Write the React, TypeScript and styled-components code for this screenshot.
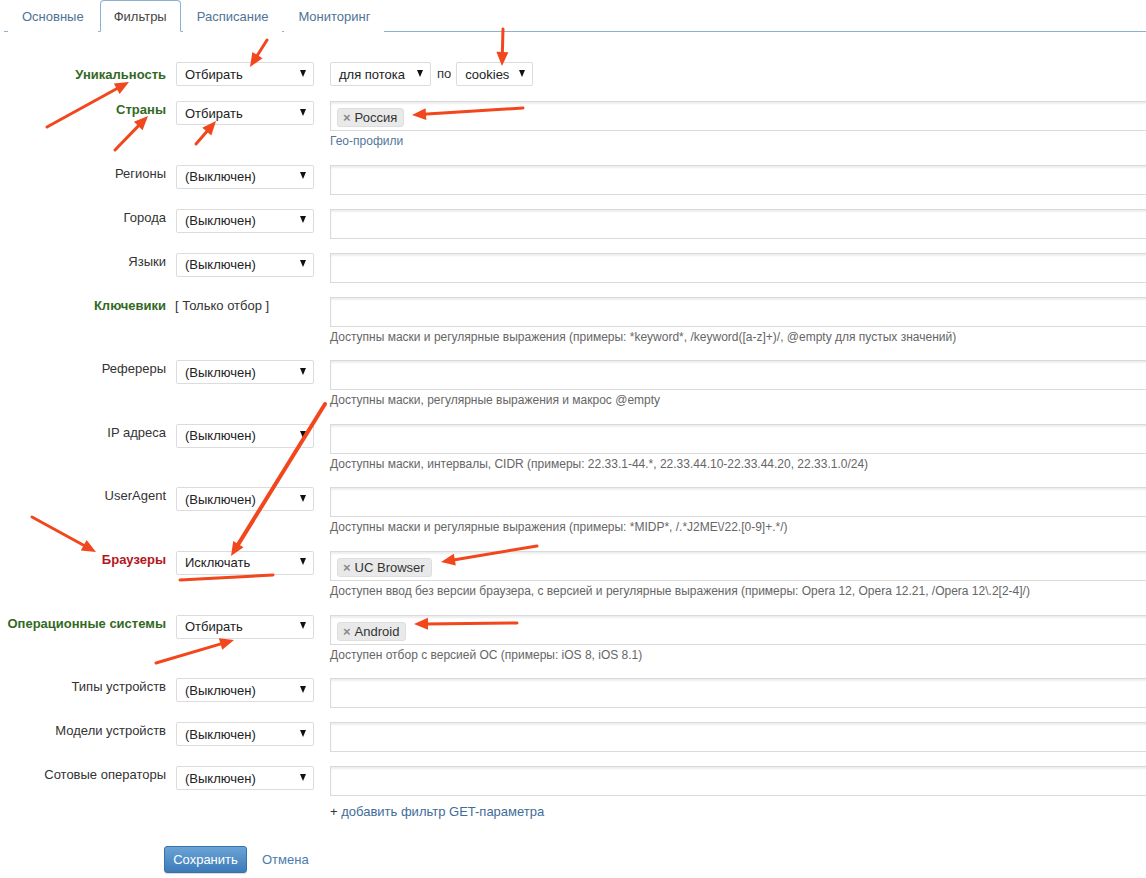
import React from 'react';
import styled, { createGlobalStyle } from 'styled-components';

const Global = createGlobalStyle`
  html, body { margin: 0; padding: 0; background: #fff; }
  body {
    font-family: "Liberation Sans", Arial, sans-serif;
    font-size: 13px;
    color: #333;
    overflow: hidden;
  }
`;

const Page = styled.div`
  position: relative;
  width: 1146px;
  height: 878px;
  overflow: hidden;
`;

const Tabs = styled.div`
  display: flex;
  margin-left: 4px;
  padding-left: 4px;
  height: 31px;
  border-bottom: 1px solid #8db1d1;
`;

const Tab = styled.div<{ $active?: boolean }>`
  box-sizing: border-box;
  height: 32px;
  padding: 7px 13px;
  line-height: 18px;
  margin-right: 2px;
  border: 1px solid ${(p) => (p.$active ? '#8db1d1' : 'transparent')};
  border-bottom-color: transparent;
  border-radius: 4px 4px 0 0;
  background: #fff;
  color: ${(p) => (p.$active ? '#444' : '#4f7396')};
`;

const Form = styled.div`
  padding-top: 30px;
  display: flex;
  flex-direction: column;
`;

const Row = styled.div<{ $center?: boolean }>`
  display: flex;
  align-items: ${(p) => (p.$center ? 'center' : 'flex-start')};
  margin-bottom: ${(p) => (p.$center ? 15 : 14)}px;
`;

const Label = styled.div<{ $tone?: 'green' | 'red' | 'plain' }>`
  width: 166px;
  flex: none;
  text-align: right;
  line-height: 17px;
  white-space: nowrap;
  font-weight: ${(p) => (p.$tone && p.$tone !== 'plain' ? 'bold' : 'normal')};
  color: ${(p) => (p.$tone === 'green' ? '#33691f' : p.$tone === 'red' ? '#b3161d' : '#333')};
`;

const SelectBox = styled.div<{ $w?: number; $ml?: number }>`
  box-sizing: border-box;
  flex: none;
  width: ${(p) => p.$w ?? 138}px;
  height: 24px;
  margin-left: ${(p) => p.$ml ?? 10}px;
  padding: 1px 8px 0;
  border: 1px solid #dcdcdc;
  border-radius: 2px;
  background: #fff;
  display: flex;
  align-items: center;
  justify-content: space-between;
  color: #222;
  font-size: 13px;
  line-height: 22px;
`;

const Caret = styled.span`
  width: 0;
  height: 0;
  border-left: 3.5px solid transparent;
  border-right: 3.5px solid transparent;
  border-top: 7px solid #111;
  margin-right: -1px;
  margin-top: -3px;
`;

const StaticText = styled.div`
  flex: none;
  width: 138px;
  margin-left: 9px;
  line-height: 18px;
  color: #333;
`;

const FieldCol = styled.div<{ $ml?: number }>`
  margin-left: ${(p) => p.$ml ?? 16}px;
  display: flex;
  flex-direction: column;
`;

const Field = styled.div`
  box-sizing: border-box;
  width: 830px;
  height: 30px;
  border: 1px solid #dadada;
  box-shadow: inset 0 2px 2px rgba(0, 0, 0, 0.07);
  padding: 6px 6px;
  display: flex;
  gap: 4px;
  background: #fff;
`;

const Tag = styled.span`
  box-sizing: border-box;
  height: 19px;
  line-height: 17px;
  padding: 0 6px 0 5px;
  border: 1px solid #dedede;
  border-radius: 3px;
  background: #e9e9e9;
  color: #333;
  font-size: 13px;
  display: inline-flex;
  align-items: center;
  gap: 4px;
`;

const TagX = styled.span`
  color: #8a8a8a;
  font-weight: bold;
  font-size: 13px;
  line-height: 17px;
`;

const Help = styled.div`
  margin-top: 1px;
  line-height: 18.6px;
  font-size: 12px;
  color: #666;
  white-space: nowrap;
`;

const HelpLink = styled.span`
  color: #52769b;
`;

const Small = styled.span`
  margin-left: 6px;
  line-height: 24px;
  color: #333;
`;

const AddRow = styled.div`
  margin-top: -7px;
  padding-left: 330px;
  line-height: 18px;
  color: #333;
`;

const AddLink = styled.span`
  color: #3f6d99;
`;

const Actions = styled.div`
  display: flex;
  align-items: center;
  padding-left: 164px;
  margin-top: 25px;
  gap: 15px;
`;

const SaveButton = styled.button`
  box-sizing: border-box;
  width: 83px;
  height: 27px;
  border: 1px solid #3671aa;
  border-radius: 3px;
  background: linear-gradient(#6aa3d6, #3c7bb7);
  color: #fff;
  font-family: "Liberation Sans", Arial, sans-serif;
  font-size: 13px;
  padding: 0;
  box-shadow: 0 1px 1px rgba(0, 0, 0, 0.15);
`;

const CancelLink = styled.span`
  color: #4a7cab;
`;

const Overlay = styled.svg`
  position: absolute;
  left: 0;
  top: 0;
  pointer-events: none;
`;

type Tone = 'green' | 'red' | 'plain';
type RowData = {
  label: string;
  tone?: Tone;
  select?: string;
  staticText?: string;
  tags?: string[];
  help?: React.ReactNode;
};

const rows: RowData[] = [
  { label: 'Страны', tone: 'green', select: 'Отбирать', tags: ['Россия'], help: <HelpLink>Гео-профили</HelpLink> },
  { label: 'Регионы', select: '(Выключен)' },
  { label: 'Города', select: '(Выключен)' },
  { label: 'Языки', select: '(Выключен)' },
  {
    label: 'Ключевики',
    tone: 'green',
    staticText: '[ Только отбор ]',
    help: 'Доступны маски и регулярные выражения (примеры: *keyword*, /keyword([a-z]+)/, @empty для пустых значений)',
  },
  { label: 'Рефереры', select: '(Выключен)', help: 'Доступны маски, регулярные выражения и макрос @empty' },
  {
    label: 'IP адреса',
    select: '(Выключен)',
    help: 'Доступны маски, интервалы, CIDR (примеры: 22.33.1-44.*, 22.33.44.10-22.33.44.20, 22.33.1.0/24)',
  },
  {
    label: 'UserAgent',
    select: '(Выключен)',
    help: 'Доступны маски и регулярные выражения (примеры: *MIDP*, /.*J2ME\\/22.[0-9]+.*/)',
  },
  {
    label: 'Браузеры',
    tone: 'red',
    select: 'Исключать',
    tags: ['UC Browser'],
    help: 'Доступен ввод без версии браузера, с версией и регулярные выражения (примеры: Opera 12, Opera 12.21, /Opera 12\\.2[2-4]/)',
  },
  {
    label: 'Операционные системы',
    tone: 'green',
    select: 'Отбирать',
    tags: ['Android'],
    help: 'Доступен отбор с версией ОС (примеры: iOS 8, iOS 8.1)',
  },
  { label: 'Типы устройств', select: '(Выключен)' },
  { label: 'Модели устройств', select: '(Выключен)' },
  { label: 'Сотовые операторы', select: '(Выключен)' },
];

const Select: React.FC<{ value: string; w?: number; ml?: number }> = ({ value, w, ml }) => (
  <SelectBox $w={w} $ml={ml}>
    <span>{value}</span>
    <Caret />
  </SelectBox>
);

type ArrowDef = { x1: number; y1: number; x2: number; y2: number; w?: number };

const arrows: ArrowDef[] = [
  { x1: 267, y1: 40, x2: 250, y2: 67 },
  { x1: 47, y1: 127, x2: 129, y2: 82 },
  { x1: 115, y1: 150, x2: 148, y2: 116 },
  { x1: 196, y1: 144, x2: 216, y2: 121 },
  { x1: 503, y1: 29, x2: 502, y2: 66 },
  { x1: 523, y1: 108, x2: 412, y2: 115 },
  { x1: 325, y1: 404, x2: 231, y2: 556, w: 4 },
  { x1: 32, y1: 517, x2: 96, y2: 552 },
  { x1: 537, y1: 546, x2: 441, y2: 562 },
  { x1: 517, y1: 623, x2: 414, y2: 624 },
  { x1: 156, y1: 663, x2: 234, y2: 640 },
];

const ARROW = '#f2461d';

const Arrow: React.FC<ArrowDef> = ({ x1, y1, x2, y2, w = 3 }) => {
  const dx = x2 - x1;
  const dy = y2 - y1;
  const len = Math.hypot(dx, dy);
  const ux = dx / len;
  const uy = dy / len;
  const head = 14;
  const half = 6;
  const bx = x2 - ux * head;
  const by = y2 - uy * head;
  const px = -uy;
  const py = ux;
  const pts = `${x2},${y2} ${bx + px * half},${by + py * half} ${bx - px * half},${by - py * half}`;
  return (
    <g>
      <line x1={x1} y1={y1} x2={bx + ux * 3} y2={by + uy * 3} stroke={ARROW} strokeWidth={w} strokeLinecap="round" />
      <polygon points={pts} fill={ARROW} />
    </g>
  );
};

export default function App() {
  return (
    <Page>
      <Global />
      <Tabs>
        <Tab>Основные</Tab>
        <Tab $active>Фильтры</Tab>
        <Tab>Расписание</Tab>
        <Tab>Мониторинг</Tab>
      </Tabs>
      <Form>
        <Row $center>
          <Label $tone="green">Уникальность</Label>
          <Select value="Отбирать" />
          <Select value="для потока" w={101} ml={16} />
          <Small>по</Small>
          <Select value="cookies" w={77} ml={5} />
        </Row>
        {rows.map((r) => (
          <Row key={r.label}>
            <Label $tone={r.tone ?? 'plain'}>{r.label}</Label>
            {r.select ? <Select value={r.select} /> : <StaticText>{r.staticText}</StaticText>}
            <FieldCol $ml={r.select ? 16 : 17}>
              <Field>
                {(r.tags ?? []).map((t) => (
                  <Tag key={t}>
                    <TagX>×</TagX>
                    {t}
                  </Tag>
                ))}
              </Field>
              {r.help ? <Help>{r.help}</Help> : null}
            </FieldCol>
          </Row>
        ))}
        <AddRow>
          + <AddLink>добавить фильтр GET-параметра</AddLink>
        </AddRow>
        <Actions>
          <SaveButton>Сохранить</SaveButton>
          <CancelLink>Отмена</CancelLink>
        </Actions>
      </Form>
      <Overlay width={1146} height={878} viewBox="0 0 1146 878">
        {arrows.map((a, i) => (
          <Arrow key={i} {...a} />
        ))}
        <line x1={180} y1={580} x2={273} y2={575} stroke={ARROW} strokeWidth={3} strokeLinecap="round" />
      </Overlay>
    </Page>
  );
}
